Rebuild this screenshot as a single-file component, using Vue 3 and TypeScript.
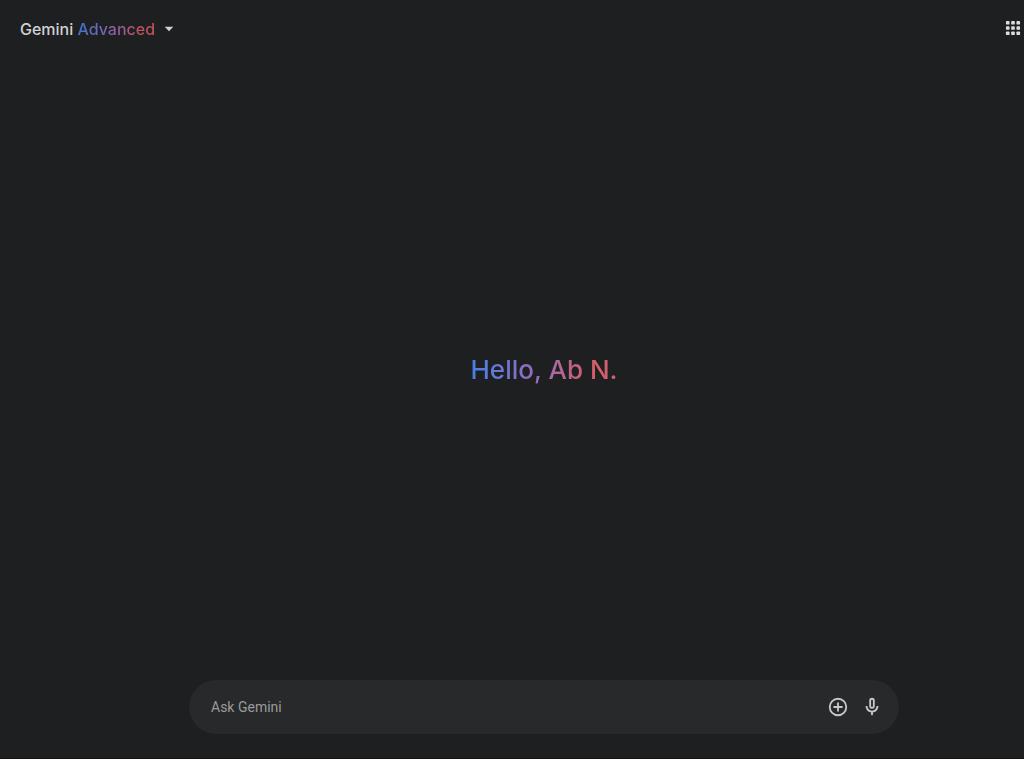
<script setup lang="ts">
import { ref } from 'vue'

const product = 'Gemini'
const tier = 'Advanced'
const userName = 'Ab N.'
const prompt = ref<string>('')
const dots: number[] = [5, 12, 19]
</script>

<template>
  <div class="page">
    <header class="top">
      <button class="model" type="button" aria-haspopup="menu">
        <span>{{ product }} <span class="gradient">{{ tier }}</span></span>
        <svg class="caret" viewBox="0 0 10 6" aria-hidden="true"><path d="M.7.7h8.6L5 5.2z" /></svg>
      </button>
      <button class="apps" type="button" aria-label="Apps">
        <svg viewBox="0 0 24 24" aria-hidden="true">
          <template v-for="y in dots" :key="y">
            <rect v-for="x in dots" :key="x" :x="x - 2.4" :y="y - 2.4" width="4.8" height="4.8" rx="1.2" />
          </template>
        </svg>
      </button>
    </header>

    <main class="content">
      <h1 class="greeting"><span class="gradient">Hello, {{ userName }}</span></h1>
      <form class="ask" @submit.prevent>
        <input v-model="prompt" type="text" placeholder="Ask Gemini" aria-label="Ask Gemini" />
        <button type="button" aria-label="Add files">
          <svg viewBox="0 0 24 24" aria-hidden="true">
            <path d="M11 17h2v-4h4v-2h-4V7h-2v4H7v2h4zm1 5a10 10 0 1 1 0-20 10 10 0 0 1 0 20zm0-2a8 8 0 1 0 0-16 8 8 0 0 0 0 16z" />
          </svg>
        </button>
        <button type="button" aria-label="Use microphone">
          <svg viewBox="0 0 24 24" aria-hidden="true">
            <path d="M12 14a3 3 0 0 1-3-3V5a3 3 0 0 1 6 0v6a3 3 0 0 1-3 3zm-1 7v-3.1A7 7 0 0 1 5 11h2a5 5 0 0 0 10 0h2a7 7 0 0 1-6 6.900V21zm1-9a1 1 0 0 0 1-1V5a1 1 0 0 0-2 0v6a1 1 0 0 0 1 1z" />
          </svg>
        </button>
      </form>
    </main>
  </div>
</template>

<style>
body {
  background: #1e1f20;
}
</style>

<style scoped>
.page {
  box-sizing: border-box;
  display: flex;
  flex-direction: column;
  min-height: 100vh;
  border-bottom: 1px solid #121112;
  background: #1e1f20;
  color: #d0d1d3;
  font-family: Inter, "Liberation Sans", sans-serif;
}

button {
  display: flex;
  align-items: center;
  justify-content: center;
  padding: 0;
  border: 0;
  background: none;
  color: inherit;
  font: inherit;
  cursor: pointer;
}

svg {
  display: block;
  fill: currentColor;
}

.gradient {
  background: linear-gradient(90deg, #4680e4 0%, #986bbd 45%, #d1606b 80%);
  background-clip: text;
  -webkit-background-clip: text;
  color: transparent;
}

.model .gradient {
  background-image: linear-gradient(90deg, #3f74d4 0%, #8a5fa6 45%, #be525d 80%);
}

.top {
  display: flex;
  align-items: center;
  justify-content: space-between;
  height: 56px;
  padding-left: 20px;
}

.model {
  gap: 9px;
  padding-top: 2px;
  font-size: 16px;
  font-weight: 500;
  line-height: 24px;
}

.caret {
  width: 10px;
  height: 6px;
}

.apps {
  width: 22px;
  height: 24px;
  color: #dcdddf;
}

.apps svg {
  width: 18px;
  height: 18px;
}

.content {
  display: flex;
  flex: 1;
  flex-direction: column;
  align-items: center;
  padding: 0 24px 24px 88px;
}

.greeting {
  display: flex;
  flex: 1;
  align-items: center;
  margin: 0;
  padding-top: 4px;
  font-size: 26px;
  font-weight: 500;
  line-height: 36px;
}

.ask {
  box-sizing: border-box;
  display: flex;
  align-items: center;
  gap: 10px;
  width: 100%;
  max-width: 710px;
  height: 54px;
  padding: 0 15px 0 22px;
  border-radius: 27px;
  background: #28292a;
}

.ask input {
  flex: 1;
  min-width: 0;
  padding: 0;
  border: 0;
  outline: 0;
  background: none;
  color: #dcdddf;
  font: 14px/20px Roboto, "Liberation Sans", sans-serif;
}

.ask input::placeholder {
  color: #9a9b9c;
  opacity: 1;
}

.ask button {
  width: 24px;
  height: 24px;
  color: #c6c7c8;
}

.ask svg {
  width: 22px;
  height: 22px;
}
</style>
